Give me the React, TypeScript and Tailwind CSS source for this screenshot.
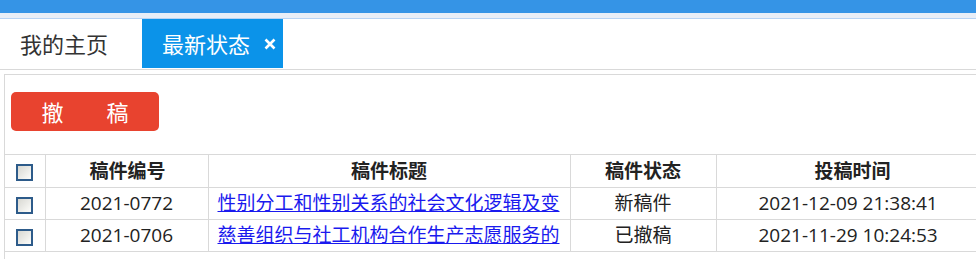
import React from "react";

const font = "font-['Open_Sans','Noto_Sans_CJK_SC',sans-serif]";

function Box() {
  return (
    <span className="inline-block w-[17px] h-[17px] border-2 border-[#2d5b8a] bg-gradient-to-br from-[#d8d8d2] to-[#fdfdfb] align-middle" />
  );
}

const rows = [
  { id: "2021-0772", title: "性别分工和性别关系的社会文化逻辑及变", status: "新稿件", time: "2021-12-09 21:38:41" },
  { id: "2021-0706", title: "慈善组织与社工机构合作生产志愿服务的", status: "已撤稿", time: "2021-11-29 10:24:53" },
];

export default function App() {
  return (
    <div className={`w-[976px] h-[259px] bg-white overflow-hidden ${font}`}>
      <div className="h-[13px] bg-[#3594e6]" />
      <div className="h-[5px] bg-[#e8eef7]" />
      <div className="h-[1px] bg-[#b7d3f4]" />
      <div className="flex h-[50px] items-start">
        <div className="w-[142px] h-[49px] flex items-center pl-[20px] text-[22px] text-[#333] font-['Noto_Sans_CJK_SC',sans-serif]">我的主页</div>
        <div className="w-[141px] h-[49px] bg-[#0b93e9] flex items-center pl-[20px] text-[22px] text-white font-['Noto_Sans_CJK_SC',sans-serif]">
          <span>最新状态</span>
          <svg className="ml-[14px]" width="12" height="12" viewBox="0 0 12 12">
            <path d="M1.5 1.5 L10.5 10.5 M10.5 1.5 L1.5 10.5" stroke="white" strokeWidth="2.6" strokeLinecap="butt" />
          </svg>
        </div>
      </div>
      <div className="h-[1px] bg-[#d9d9d9]" />
      <div className="h-[4px]" />
      <div className="ml-[4px] border-l border-t border-[#d9d9d9] h-[200px] overflow-hidden">
        <div className="pt-[17px] pl-[6px] h-[79px]">
          <button className="w-[148px] h-[39px] rounded-[5px] bg-[#e8432f] text-white text-[22px] flex items-center justify-center gap-[43px] font-['Noto_Sans_CJK_SC',sans-serif]">
            <span>撤</span>
            <span>稿</span>
          </button>
        </div>
        <table className="border-collapse table-fixed w-[1000px] text-[19px] text-[#222]">
          <colgroup>
            <col className="w-[40px]" />
            <col className="w-[163px]" />
            <col className="w-[362px]" />
            <col className="w-[146px]" />
            <col className="w-[289px]" />
          </colgroup>
          <thead>
            <tr className="h-[33px] border-t border-b border-[#d9d9d9]">
              <th className="border-r border-[#d9d9d9] text-center"><Box /></th>
              <th className="border-r border-[#d9d9d9] font-bold pl-[2px]">稿件编号</th>
              <th className="border-r border-[#d9d9d9] font-bold">稿件标题</th>
              <th className="border-r border-[#d9d9d9] font-bold">稿件状态</th>
              <th className="font-bold text-left pl-[98px]">投稿时间</th>
            </tr>
          </thead>
          <tbody>
            {rows.map((r) => (
              <tr key={r.id} className="h-[32px] border-b border-[#d9d9d9]">
                <td className="border-r border-[#d9d9d9] text-center"><Box /></td>
                <td className="border-r border-[#d9d9d9] text-center">{r.id}</td>
                <td className="border-r border-[#d9d9d9] pl-[9px] whitespace-nowrap overflow-hidden">
                  <a className="text-[#1a1aee] underline" href="#">{r.title}</a>
                </td>
                <td className="border-r border-[#d9d9d9] text-center">{r.status}</td>
                <td className="text-left pl-[42px] whitespace-nowrap">{r.time}</td>
              </tr>
            ))}
          </tbody>
        </table>
      </div>
    </div>
  );
}
